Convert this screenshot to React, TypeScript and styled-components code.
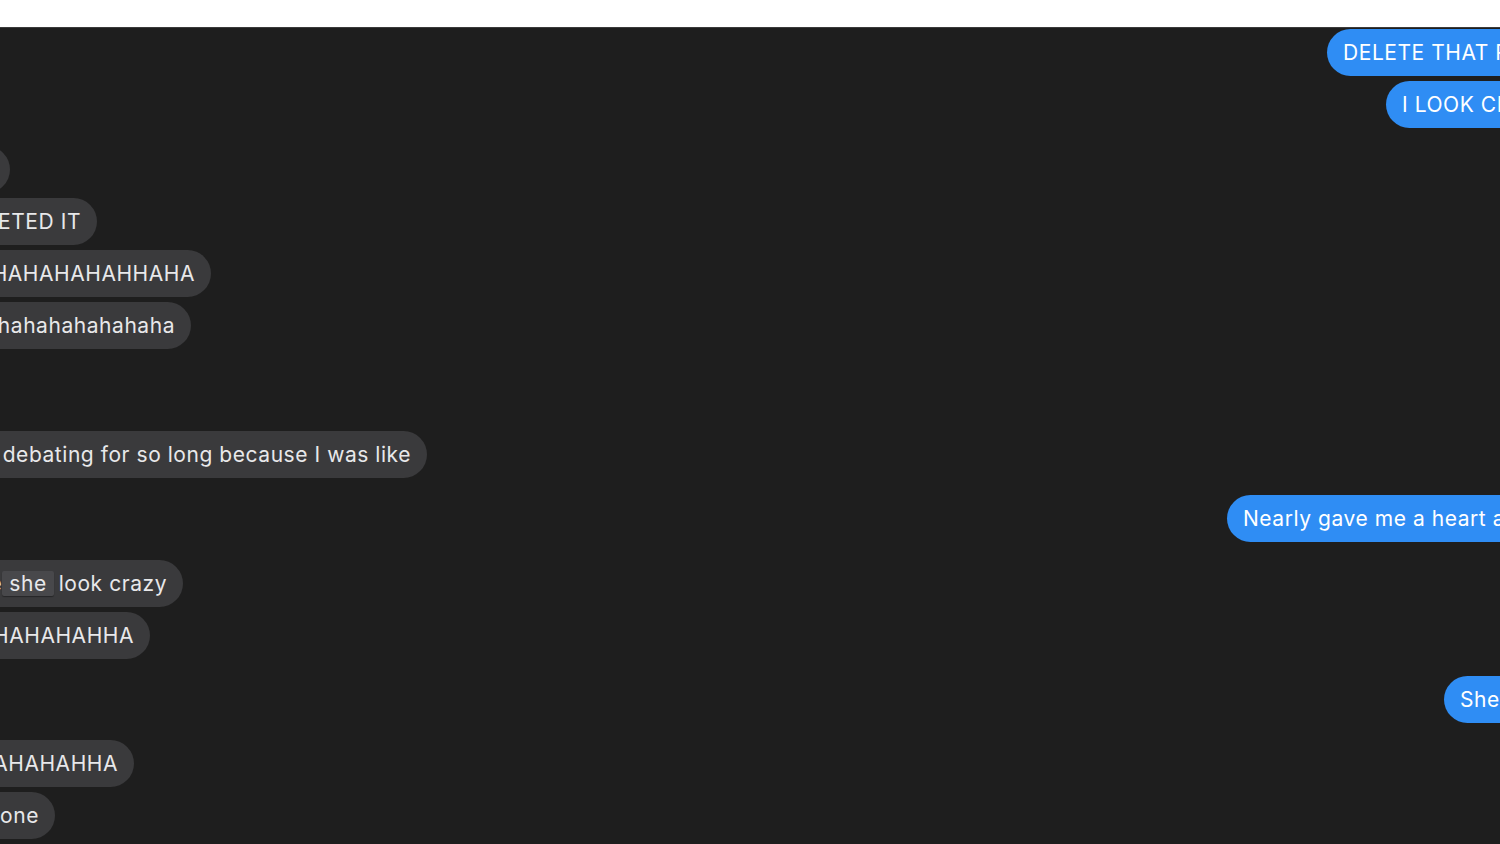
import React from 'react';
import styled, { createGlobalStyle } from 'styled-components';

const GlobalStyle = createGlobalStyle`
  html, body {
    margin: 0;
    padding: 0;
    background: #1e1e1e;
    overflow: hidden;
  }
  body {
    font-family: Inter, "Noto Sans", "Liberation Sans", sans-serif;
  }
`;

const Page = styled.div`
  width: 1500px;
  height: 844px;
  display: flex;
  flex-direction: column;
  background: #1e1e1e;
  overflow: hidden;
`;

const TopBar = styled.div`
  height: 27px;
  flex-shrink: 0;
  background: #ffffff;
  border-bottom: 1px solid #3b3b3b;
`;

const Thread = styled.div`
  display: flex;
  flex-direction: column;
`;

const Row = styled.div<{ $gap: number }>`
  display: flex;
  margin-top: ${(p) => p.$gap}px;
`;

const Bubble = styled.div<{ $mine?: boolean; $edge: number }>`
  height: 47px;
  box-sizing: border-box;
  display: inline-flex;
  align-items: center;
  flex-shrink: 0;
  white-space: nowrap;
  font-size: 21px;
  letter-spacing: 0.55px;
  border-radius: 24px;
  padding: 0 16px;
  background: ${(p) => (p.$mine ? '#2f8df4' : '#3a3a3c')};
  color: ${(p) => (p.$mine ? '#ffffff' : '#e8e8ea')};
  ${(p) =>
    p.$mine
      ? `margin-left: ${p.$edge}px;`
      : `margin-left: -80px; width: ${p.$edge + 80}px; justify-content: flex-end;`}
`;

const Highlight = styled.span`
  display: inline-block;
  background: #48484b;
  border-radius: 2px;
  padding: 0 7px;
  line-height: 25px;
  margin-right: 5px;
  box-shadow: 0 1px 1px rgba(0, 0, 0, 0.35);
`;

type Msg = { mine?: boolean; edge: number; gap: number; text: React.ReactNode };

const messages: Msg[] = [
  { mine: true, edge: 1327, gap: 1, text: 'DELETE THAT RIGHT NOW' },
  { mine: true, edge: 1386, gap: 5, text: 'I LOOK CRAZY' },
  { edge: 10, gap: 18, text: 'omg' },
  { edge: 97, gap: 5, text: 'I DELETED IT' },
  { edge: 211, gap: 5, text: 'HAHAHAHAHAHAHAHAHHAHA' },
  { edge: 191, gap: 5, text: 'hahahahahahahahahahaha' },
  { edge: 427, gap: 82, text: 'I was debating for so long because I was like' },
  { mine: true, edge: 1227, gap: 17, text: 'Nearly gave me a heart attack' },
  {
    edge: 183,
    gap: 18,
    text: (
      <>
        I made <Highlight>she</Highlight>look crazy
      </>
    ),
  },
  { edge: 150, gap: 5, text: 'HAHAHAHAHAHAHAHAHAHAHHA' },
  { mine: true, edge: 1444, gap: 17, text: 'She deserves it' },
  { edge: 134, gap: 17, text: 'HAHAHAHAHAHAHAHAHAHAHAHAHHA' },
  { edge: 55, gap: 5, text: 'gone' },
];

const App = () => {
  return (
    <Page>
      <GlobalStyle />
      <TopBar />
      <Thread>
        {messages.map((m, i) => (
          <Row key={i} $gap={m.gap}>
            <Bubble $mine={m.mine} $edge={m.edge}>
              {m.text}
            </Bubble>
          </Row>
        ))}
      </Thread>
    </Page>
  );
};

export default App;
